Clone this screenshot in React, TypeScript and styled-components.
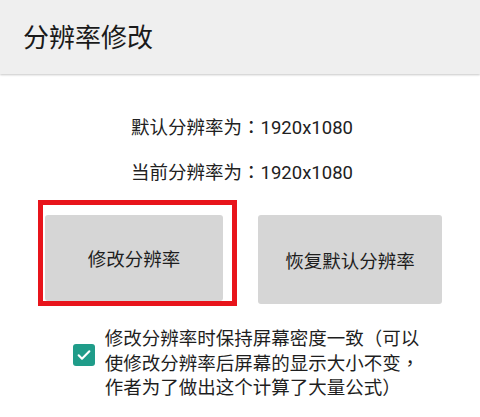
import React from "react";
import styled, { createGlobalStyle } from "styled-components";

const GlobalStyle = createGlobalStyle`
  html, body {
    margin: 0;
    padding: 0;
    background: #ffffff;
  }
  body {
    font-family: Roboto, "Noto Sans CJK SC", sans-serif;
    color: #212121;
  }
`;

const App = () => {
  return (
    <Page>
      <GlobalStyle />
      <TopBar>
        <Title>分辨率修改</Title>
      </TopBar>
      <Content>
        <InfoLine>
          默认分辨率为<Punct>：</Punct>1920x1080
        </InfoLine>
        <InfoLine>
          当前分辨率为<Punct>：</Punct>1920x1080
        </InfoLine>
        <ButtonRow>
          <Highlight>
            <ActionButton>修改分辨率</ActionButton>
          </Highlight>
          <ActionButton wide>恢复默认分辨率</ActionButton>
        </ButtonRow>
        <OptionRow>
          <CheckBox>
            <svg width="16" height="16" viewBox="0 0 24 24">
              <path
                d="M4 12.5l5 5L20 6.5"
                fill="none"
                stroke="#ffffff"
                strokeWidth="3.2"
                strokeLinecap="round"
                strokeLinejoin="round"
              />
            </svg>
          </CheckBox>
          <OptionText>
            修改分辨率时保持屏幕密度一致<Punct>（</Punct>可以
            <br />
            使修改分辨率后屏幕的显示大小不变<Punct>，</Punct>
            <br />
            作者为了做出这个计算了大量公式<Punct>）</Punct>
          </OptionText>
        </OptionRow>
      </Content>
    </Page>
  );
};

export default App;

const Page = styled.div`
  width: 480px;
  height: 417px;
  overflow: hidden;
`;

const TopBar = styled.header`
  height: 74px;
  background: #efefef;
  display: flex;
  align-items: center;
  padding-left: 23px;
  box-shadow: 0 1px 2px rgba(0, 0, 0, 0.22);
  position: relative;
`;

const Title = styled.h1`
  margin: 0;
  font-size: 26px;
  font-weight: 400;
  color: #1a1a1a;
  margin-top: -4px;
`;

const Content = styled.main`
  display: flex;
  flex-direction: column;
  align-items: center;
  padding-top: 40px;
`;

const Punct = styled.span`
  font-family: "Noto Sans CJK TC", sans-serif;
`;

const InfoLine = styled.div`
  font-size: 18.5px;
  line-height: 24px;
  height: 24px;
  margin-bottom: 21px;
  margin-left: 4px;
`;

const ButtonRow = styled.div`
  display: flex;
  align-items: flex-start;
  gap: 21px;
  margin-top: -4px;
`;

const Highlight = styled.div`
  border: 5px solid #e8141b;
  padding: 10px 9px 0 2px;
  display: flex;
`;

const ActionButton = styled.button<{ wide?: boolean }>`
  width: ${({ wide }) => (wide ? "184px" : "178px")};
  height: ${({ wide }) => (wide ? "89px" : "86px")};
  margin-top: ${({ wide }) => (wide ? "15px" : "0")};
  border: none;
  border-radius: 3px;
  background: #d6d6d6;
  font-family: Roboto, "Noto Sans CJK SC", sans-serif;
  font-size: 18.5px;
  color: #1e1e1e;
  padding: 0;
`;

const OptionRow = styled.div`
  display: flex;
  align-items: flex-start;
  gap: 10px;
  margin-top: 20px;
  margin-left: 12px;
`;

const CheckBox = styled.div`
  width: 22px;
  height: 22px;
  margin-top: 18px;
  border-radius: 3px;
  background: #1f9c89;
  display: flex;
  align-items: center;
  justify-content: center;
`;

const OptionText = styled.div`
  font-size: 18.5px;
  line-height: 22.5px;
  color: #1e1e1e;
`;
